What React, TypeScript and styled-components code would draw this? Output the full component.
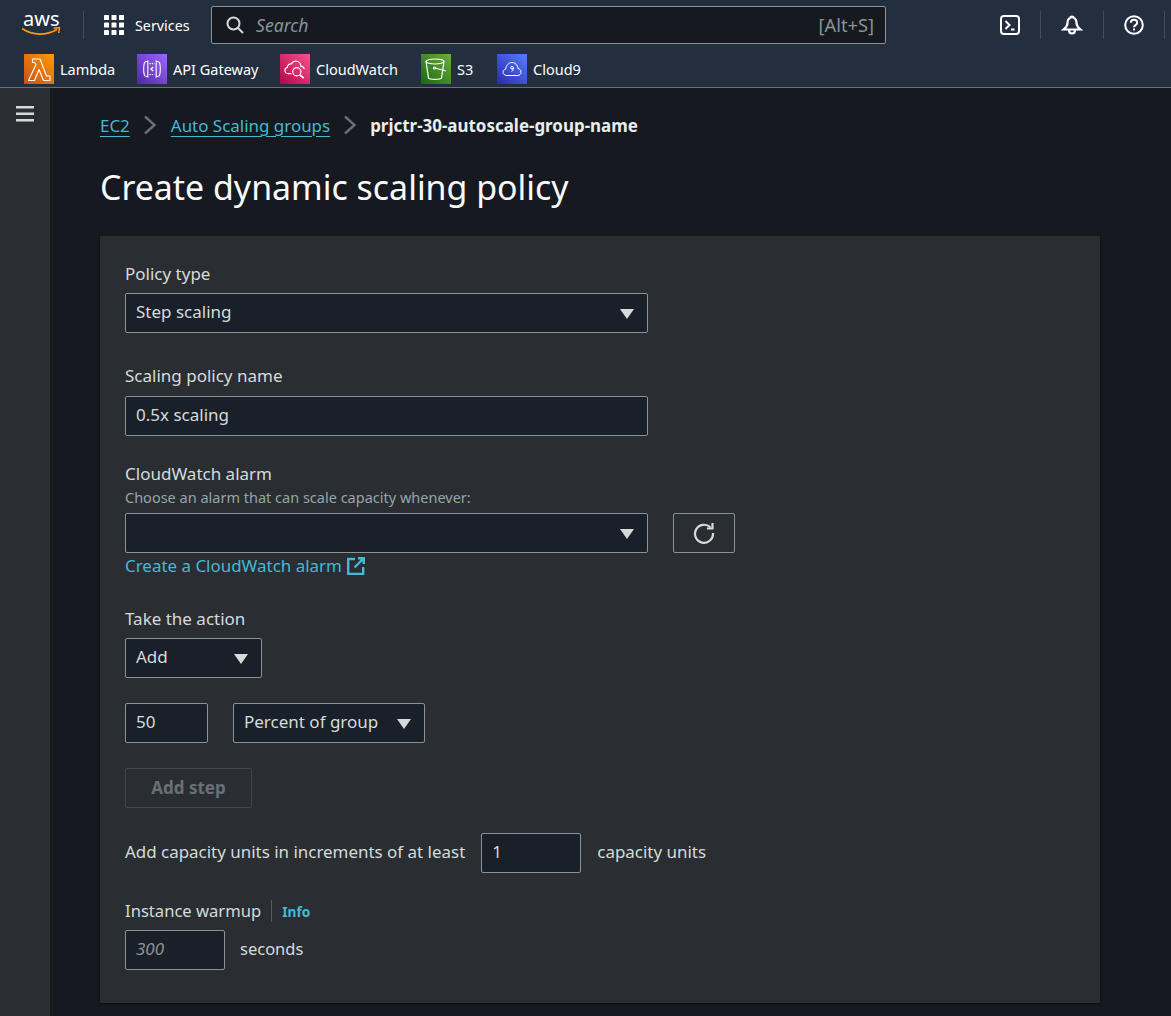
import React from "react";
import styled, { createGlobalStyle } from "styled-components";

const Global = createGlobalStyle`
  html, body { margin: 0; padding: 0; background: #16191f; }
  body { font-family: "Noto Sans", "Open Sans", sans-serif; color: #d5dbdb; }
  * { box-sizing: border-box; }
`;

const Page = styled.div`
  width: 1171px; height: 1016px; overflow: hidden; display: flex; flex-direction: column;
`;
const Header = styled.header`
  height: 88px; flex: none; background: #232f3e; border-bottom: 1px solid #687078;
  display: flex; flex-direction: column;
`;
const TopRow = styled.div`
  height: 50px; display: flex; align-items: center; padding-left: 22px;
`;
const LogoBox = styled.div`
  width: 44px; height: 36px; flex: none; margin-top: -9px;
`;
const NavDivider = styled.span<{ $ml: number; $mr: number }>`
  width: 1px; height: 28px; background: #414d5c; flex: none;
  margin-left: ${p => p.$ml}px; margin-right: ${p => p.$mr}px;
`;
const ServicesButton = styled.div`
  display: flex; align-items: center; gap: 11px; color: #fff; font-size: 14.3px; width: 107px; flex: none;
`;
const SearchBox = styled.div`
  width: 675px; height: 38px; margin-top: -1px; flex: none; background: #16191f; border: 1px solid #879596; border-radius: 2px;
  display: flex; align-items: center; padding: 0 11px 0 14px; gap: 12px;
`;
const SearchText = styled.span`
  font-style: italic; color: #879596; font-size: 17.6px; flex: 1;
`;
const Shortcut = styled.span`
  color: #879596; font-size: 18.3px;
`;
const TerminalSlot = styled.div`
  width: 154px; padding-left: 94px; display: flex; justify-content: center; align-items: center; flex: none;
`;
const IconSlot = styled.div<{ $w: number }>`
  width: ${p => p.$w}px; display: flex; justify-content: center; align-items: center; flex: none;
`;
const BottomRow = styled.div`
  height: 37px; display: flex; align-items: center; padding-left: 24px;
`;
const Fav = styled.div<{ $w: number }>`
  display: flex; align-items: center; gap: 6px; width: ${p => p.$w}px; flex: none;
  color: #fff; font-size: 14.5px;
`;
const FavIcon = styled.div<{ $from: string; $to: string }>`
  width: 30px; height: 30px; flex: none; display: flex; align-items: center; justify-content: center;
  background: linear-gradient(45deg, ${p => p.$from}, ${p => p.$to});
`;
const Body = styled.div`
  flex: 1; display: flex; min-height: 0;
`;
const Sidebar = styled.aside`
  width: 50px; flex: none; background: #2a2e33; display: flex; justify-content: center; padding-top: 17px; padding-right: 1px;
`;
const Main = styled.main`
  flex: 1; padding: 0 71px 0 50px; min-width: 0;
`;
const Crumbs = styled.nav`
  display: flex; align-items: center; height: 22px; margin-top: 27px; padding-bottom: 2px; font-size: 16.95px;
`;
const CrumbLink = styled.a`
  color: #44b9d6; text-decoration: underline; text-decoration-thickness: 1px; text-underline-offset: 4px;
`;
const CrumbSep = styled.span<{ $w: number }>`
  width: ${p => p.$w}px; display: flex; justify-content: center; flex: none;
`;
const CrumbCurrent = styled.span`
  color: #eaeded; font-weight: 700;
`;
const Title = styled.h1`
  margin: 28px 0 0 0; font-size: 33.9px; line-height: 44px; font-weight: 400; color: #fafafa; height: 44px;
`;
const Panel = styled.section`
  margin-top: 27px; width: 1000px; height: 767px; background: #2a2e33; padding: 25px 25px 0;
  box-shadow: 0 1px 2px rgba(0,0,0,.6);
  display: flex; flex-direction: column; align-items: flex-start;
`;
const Label = styled.div<{ $mt?: number }>`
  font-size: 17px; line-height: 26px; color: #d5dbdb; margin-top: ${p => p.$mt ?? 0}px; height: 25px;
`;
const WarmupLabel = styled(Label)`
  font-size: 16.6px;
`;
const Hint = styled.div`
  font-size: 14.5px; line-height: 18px; color: #95a5a6; height: 18px; margin-top: 2px; margin-bottom: 7px;
`;
const Field = styled.div<{ $w: number; $mt?: number; $dim?: boolean }>`
  width: ${p => p.$w}px; height: 40px; flex: none; margin-top: ${p => p.$mt ?? 0}px;
  background: #1a2029; border: 1px solid #879596; border-radius: 2px;
  display: flex; align-items: center; justify-content: space-between;
  padding: 0 13px 4px 10px; font-size: 17px; color: ${p => (p.$dim ? "#879596" : "#d5dbdb")};
  font-style: ${p => (p.$dim ? "italic" : "normal")};
`;
const Caret = styled.span`
  width: 0; height: 0; flex: none; margin-top: 5px;
  border-left: 7px solid transparent; border-right: 7px solid transparent; border-top: 10px solid #d5dbdb;
`;
const Row = styled.div<{ $gap: number; $mt?: number }>`
  display: flex; align-items: center; gap: ${p => p.$gap}px; margin-top: ${p => p.$mt ?? 0}px;
`;
const RefreshButton = styled.div`
  width: 62px; height: 40px; border: 1px solid #879596; border-radius: 2px;
  display: flex; align-items: center; justify-content: center;
`;
const ExternalLink = styled.a`
  display: flex; align-items: center; gap: 5px; color: #44b9d6; font-size: 16.95px; line-height: 26px; height: 26px;
`;
const DisabledButton = styled.div`
  width: 127px; height: 40px; margin-top: 25px; padding-bottom: 2px; border: 1px solid #414750; border-radius: 2px;
  display: flex; align-items: center; justify-content: center; color: #687078; font-weight: 700; font-size: 17px;
`;
const Text = styled.span`
  font-size: 16.95px; color: #d5dbdb; margin-top: -4px;
`;
const SecondsText = styled(Text)`
  font-size: 16.5px;
`;
const InfoDivider = styled.span`
  width: 1px; height: 22px; background: #545b64;
`;
const InfoLink = styled.a`
  font-size: 13.7px; font-weight: 700; color: #44b9d6; margin-top: 2px;
`;

const AwsLogo = () => (
  <svg width="44" height="36" viewBox="0 -8 44 36" fill="none">
    <text x="1" y="15" fontFamily="Noto Sans, sans-serif" fontSize="20" fill="#fff">aws</text>
    <path d="M0 17.500c5 3.600 11 5.600 18 5.600 6 0 12-1.700 17-4.600" stroke="#f90" strokeWidth="1.800" fill="none" />
    <path d="M31.500 17.300l6-.6-.8 5.300" stroke="#f90" strokeWidth="1.500" fill="none" />
  </svg>
);
const Grid = () => (
  <svg width="20" height="20" viewBox="0 0 20 20" fill="#fff">
    {[0, 7.500, 15].flatMap(y => [0, 7.500, 15].map(x => <rect key={`${x}-${y}`} x={x} y={y} width="5" height="5" rx=".6" />))}
  </svg>
);
const SearchIcon = () => (
  <svg width="18" height="18" viewBox="0 0 18 18" fill="none" stroke="#d5dbdb" strokeWidth="2">
    <circle cx="7.500" cy="7.500" r="6" /><path d="M12 12l5 5" />
  </svg>
);
const TerminalIcon = () => (
  <svg width="20" height="20" viewBox="0 0 20 20" fill="none" stroke="#fff" strokeWidth="2">
    <rect x="1" y="1" width="18" height="18" rx="3" /><path d="M5.500 6l4 4-4 4M11 14.500h3.500" />
  </svg>
);
const BellIcon = () => (
  <svg width="22" height="22" viewBox="0 0 22 22" fill="none" stroke="#fff" strokeWidth="2.200">
    <path d="M11 2.500c-.8 0-1.500.7-1.500 1.200C7 4.500 6.500 6.500 6.500 9c0 3-1.500 4.500-4 6.500h17c-2.500-2-4-3.500-4-6.500 0-2.500-.5-4.500-3-5.300 0-.5-.7-1.200-1.500-1.200z" />
    <path d="M8 16c0 2 1.200 3.500 3 3.500s3-1.500 3-3.500" />
  </svg>
);
const HelpIcon = () => (
  <svg width="20" height="20" viewBox="0 0 20 20" fill="none" stroke="#fff" strokeWidth="2">
    <circle cx="10" cy="10" r="8.800" />
    <path d="M6.800 7.800c0-1.800 1.400-3 3.200-3s3.200 1.200 3.200 2.900c0 2.400-3.200 2.400-3.200 4.500" />
    <path d="M10 13.500v2" />
  </svg>
);
const LambdaIcon = () => (
  <svg width="30" height="30" viewBox="0 0 30 30" fill="none" stroke="#fff" strokeWidth="1.100" strokeLinejoin="round">
    <path d="M8.500 5h7.500l6.500 17h3.500v4.500h-6.500L15 15.500 10.500 26.500H4.500L12 10.500 10.500 8.500H8.500z" />
  </svg>
);
const ApiIcon = () => (
  <svg width="20" height="20" viewBox="0 0 22 24" fill="none" stroke="#fff" strokeWidth="1.300">
    <path d="M6 2.500v19L2 20c-.7-2.500-1-5-1-8s.3-5.500 1-8zM16 2.500v19l4-1.500c.7-2.500 1-5 1-8s-.3-5.500-1-8z" />
    <path d="M8 5.500h6M8 18.500h6" strokeDasharray="1.500 1.300" />
    <path d="M12.500 9.500L9.500 12l3 2.500" strokeWidth="1.500" />
  </svg>
);
const CloudWatchIcon = () => (
  <svg width="22" height="22" viewBox="0 0 24 24" fill="none" stroke="#fff" strokeWidth="1.300">
    <path d="M8 17H4.500C2.500 17 1 15.500 1 13.500c0-1.800 1.200-3 2.700-3.300C3.800 7.500 6 6 8 6.500 9.200 4.500 11 3.500 13 3.500c3 0 5.300 2.300 5.300 5.300 2 .3 3.700 1.500 3.700 3.200" />
    <circle cx="14" cy="15" r="4.500" /><path d="M17.500 18.500l4 3.500" strokeWidth="2" />
  </svg>
);
const S3Icon = () => (
  <svg width="24" height="24" viewBox="0 0 24 24" fill="none" stroke="#fff" strokeWidth="1.200">
    <ellipse cx="11" cy="4.500" rx="9" ry="2.500" />
    <path d="M2 4.500L4.500 21c1 1.800 12 1.800 13 0L20 4.500" /><path d="M11 11l11 3" />
    <circle cx="10.500" cy="11" r="1" />
  </svg>
);
const Cloud9Icon = () => (
  <svg width="20" height="18" viewBox="0 0 20 18" fill="none" stroke="#fff" strokeWidth="1">
    <path d="M5 15.500C2.500 15.500 1 14 1 12.300c0-1.600 1.200-2.800 2.700-3.100C4 5.500 6.800 2.500 10 2.500c3.200 0 5.500 2.500 6 6 1.800.3 3 1.900 3 3.700 0 1.800-1.400 3.300-3.200 3.300z" />
    <circle cx="10" cy="7.800" r="1.300" /><path d="M11.300 7.800c0 2.200-.3 3.200-1.800 3.700" />
  </svg>
);
const MenuIcon = () => (
  <svg width="20" height="18" viewBox="0 0 20 18" fill="#d5dbdb">
    <rect x="1" y="1" width="18" height="2.500" /><rect x="1" y="7.500" width="18" height="2.500" /><rect x="1" y="14" width="18" height="2.500" />
  </svg>
);
const Chevron = () => (
  <svg width="14" height="20" viewBox="0 0 14 20" fill="none" stroke="#687078" strokeWidth="2.400">
    <path d="M2 1.500L11.500 10 2 18.500" />
  </svg>
);
const RefreshIcon = () => (
  <svg width="22" height="22" viewBox="0 0 22 22" fill="none" stroke="#d5dbdb" strokeWidth="2.200">
    <path d="M17.500 5.500A9 9 0 1 0 20 11" />
    <path d="M19.500 1v5.500H14" />
  </svg>
);
const ExternalIcon = () => (
  <svg width="18" height="18" viewBox="0 0 18 18" fill="none" stroke="#44b9d6" strokeWidth="2.400">
    <path d="M8 2H1.200v15h15v-7" /><path d="M11 1.200h5.800V7M16.800 1.200L7.500 10.500" />
  </svg>
);

export default function App() {
  return (
    <Page>
      <Global />
      <Header>
        <TopRow>
          <LogoBox><AwsLogo /></LogoBox>
          <NavDivider $ml={17} $mr={20} />
          <ServicesButton><Grid />Services</ServicesButton>
          <SearchBox>
            <SearchIcon />
            <SearchText>Search</SearchText>
            <Shortcut>[Alt+S]</Shortcut>
          </SearchBox>
          <TerminalSlot><TerminalIcon /></TerminalSlot>
          <NavDivider $ml={0} $mr={0} />
          <IconSlot $w={62}><BellIcon /></IconSlot>
          <NavDivider $ml={0} $mr={0} />
          <IconSlot $w={60}><HelpIcon /></IconSlot>
          <NavDivider $ml={0} $mr={0} />
        </TopRow>
        <BottomRow>
          <Fav $w={113}><FavIcon $from="#c8511b" $to="#f90"><LambdaIcon /></FavIcon>Lambda</Fav>
          <Fav $w={143}><FavIcon $from="#4d27a8" $to="#a166ff"><ApiIcon /></FavIcon>API Gateway</Fav>
          <Fav $w={141}><FavIcon $from="#b0084d" $to="#ff4f8b"><CloudWatchIcon /></FavIcon>CloudWatch</Fav>
          <Fav $w={76}><FavIcon $from="#1b660f" $to="#6cae3e"><S3Icon /></FavIcon>S3</Fav>
          <Fav $w={100}><FavIcon $from="#2e27ad" $to="#527fff"><Cloud9Icon /></FavIcon>Cloud9</Fav>
        </BottomRow>
      </Header>
      <Body>
        <Sidebar><div><MenuIcon /></div></Sidebar>
        <Main>
          <Crumbs>
            <CrumbLink>EC2</CrumbLink>
            <CrumbSep $w={41}><Chevron /></CrumbSep>
            <CrumbLink>Auto Scaling groups</CrumbLink>
            <CrumbSep $w={40}><Chevron /></CrumbSep>
            <CrumbCurrent>prjctr-30-autoscale-group-name</CrumbCurrent>
          </Crumbs>
          <Title>Create dynamic scaling policy</Title>
          <Panel>
            <Label>Policy type</Label>
            <Field $w={523} $mt={7}>Step scaling<Caret /></Field>
            <Label $mt={30}>Scaling policy name</Label>
            <Field $w={523} $mt={8}>0.5x scaling</Field>
            <Label $mt={25}>CloudWatch alarm</Label>
            <Hint>Choose an alarm that can scale capacity whenever:</Hint>
            <Row $gap={25}>
              <Field $w={523}><span /><Caret /></Field>
              <RefreshButton><RefreshIcon /></RefreshButton>
            </Row>
            <ExternalLink>Create a CloudWatch alarm <ExternalIcon /></ExternalLink>
            <Label $mt={27}>Take the action</Label>
            <Field $w={137} $mt={7}>Add<Caret /></Field>
            <Row $gap={25} $mt={25}>
              <Field $w={83}>50</Field>
              <Field $w={192}>Percent of group<Caret /></Field>
            </Row>
            <DisabledButton>Add step</DisabledButton>
            <Row $gap={16} $mt={25}>
              <Text>Add capacity units in increments of at least</Text>
              <Field $w={100}>1</Field>
              <Text>capacity units</Text>
            </Row>
            <Row $gap={10} $mt={25}>
              <WarmupLabel>Instance warmup</WarmupLabel>
              <InfoDivider />
              <InfoLink>Info</InfoLink>
            </Row>
            <Row $gap={15} $mt={7}>
              <Field $w={100} $dim>300</Field>
              <SecondsText>seconds</SecondsText>
            </Row>
          </Panel>
        </Main>
      </Body>
    </Page>
  );
}
